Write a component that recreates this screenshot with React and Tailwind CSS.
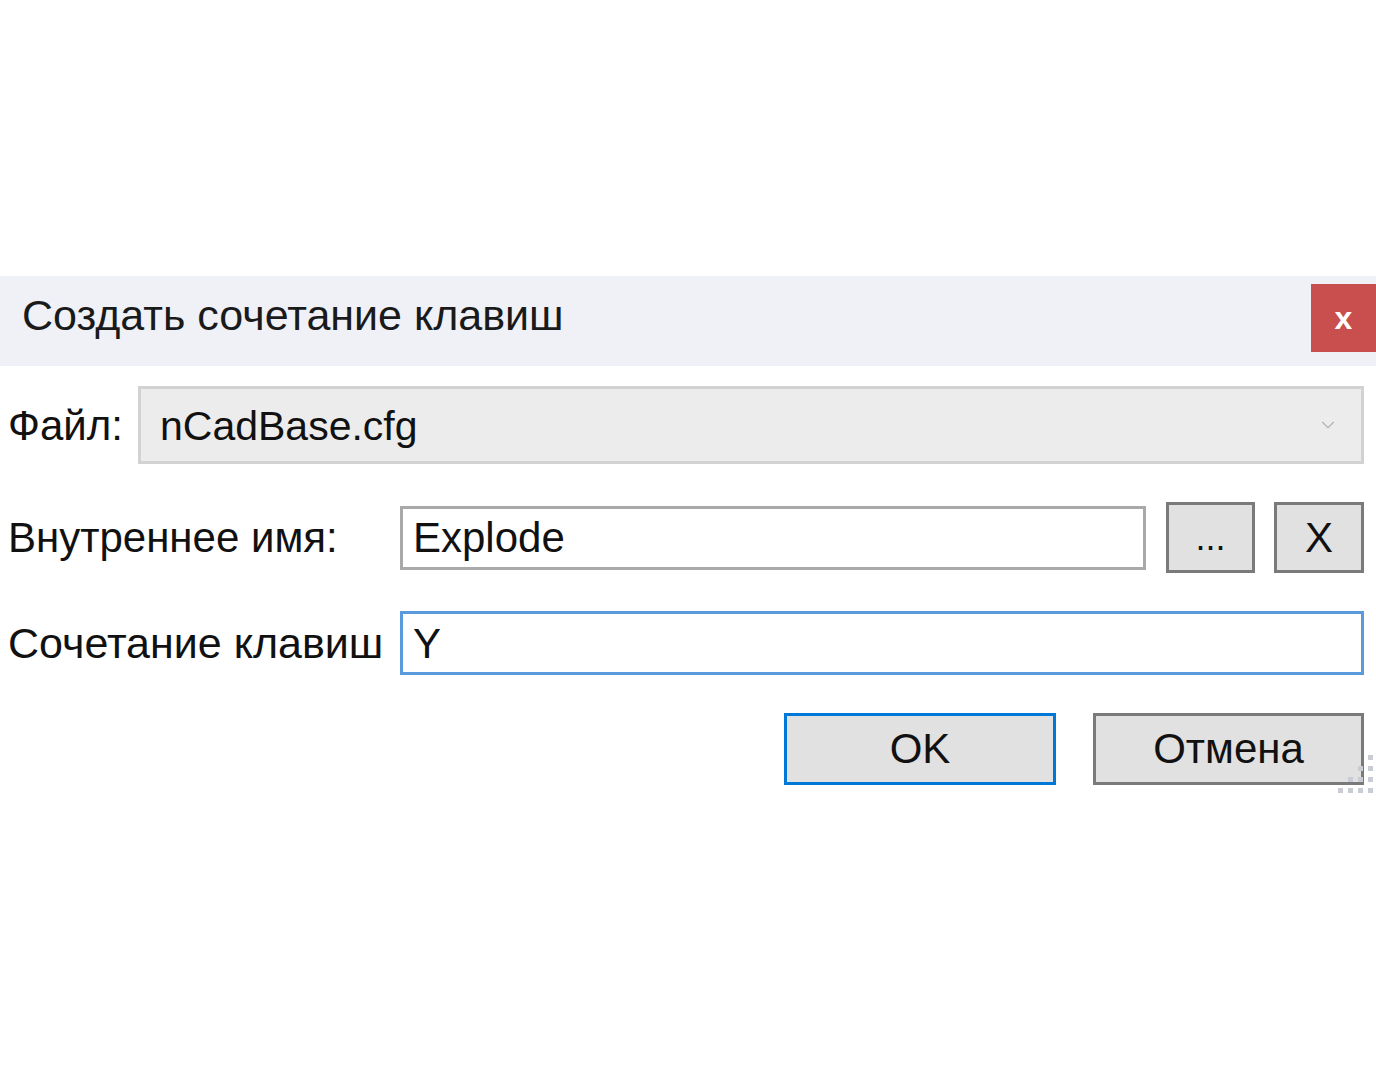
import { ChevronDown } from 'lucide-react';

const font = { fontFamily: '"Liberation Sans", Arial, sans-serif' };

function GripDots() {
  const dots = [
    [3, 0], [2, 1], [3, 1], [1, 2], [2, 2], [3, 2], [0, 3], [1, 3], [2, 3], [3, 3],
  ];
  return (
    <svg width="40" height="44" viewBox="0 0 40 44" className="shrink-0">
      {dots.map(([c, r]) => (
        <rect key={c + '-' + r} x={c * 10 + 2} y={r * 11 + 2} width="5" height="5" fill="#c9ccd4" />
      ))}
    </svg>
  );
}

export default function App() {
  return (
    <div className="w-[1376px] h-[1074px] bg-white pt-[276px] text-[#111]" style={font}>
      <div className="h-[90px] bg-[#eff1f6] flex items-start">
        <div className="pl-[22px] pt-[11px] text-[43px] leading-[56px] text-[#1a1a1a]">Создать сочетание клавиш</div>
        <button className="ml-auto mt-[8px] w-[65px] h-[68px] bg-[#c94f4f] text-white text-[32px] font-bold leading-none flex items-center justify-center">
          x
        </button>
      </div>

      <div className="pl-[8px] pr-[12px]">
        <div className="mt-[20px] flex items-center">
          <div className="w-[130px] text-[42px]">Файл:</div>
          <div className="flex-1 h-[78px] bg-[#ececec] border-[3px] border-[#d2d2d2] flex items-center pl-[19px] pr-[22px]">
            <span className="text-[41px] flex-1 pt-[3px]">nCadBase.cfg</span>
            <ChevronDown size={22} strokeWidth={1.5} className="text-[#b8b8b8]" />
          </div>
        </div>

        <div className="mt-[38px] flex items-center">
          <div className="w-[392px] text-[42px]">Внутреннее имя:</div>
          <div className="w-[746px] h-[64px] border-[3px] border-[#a9a9a9] bg-white flex items-center pl-[10px] text-[42px]">
            Explode
          </div>
          <button className="ml-[20px] w-[89px] h-[71px] bg-[#e1e1e1] border-[3px] border-[#7a7a7a] text-[36px] leading-none flex items-end justify-center pb-[14px]">
            ...
          </button>
          <button className="ml-[19px] w-[90px] h-[71px] bg-[#e1e1e1] border-[3px] border-[#7a7a7a] text-[42px] leading-none flex items-center justify-center">
            X
          </button>
        </div>

        <div className="mt-[38px] flex items-center">
          <div className="w-[392px] text-[43px]">Сочетание клавиш</div>
          <div className="flex-1 h-[64px] border-[3px] border-[#5a9bde] bg-white flex items-center pl-[10px] text-[42px]">
            Y
          </div>
        </div>

        <div className="mt-[37px] flex justify-end items-start">
          <button className="w-[272px] h-[72px] bg-[#e1e1e1] border-[3px] border-[#0078d7] text-[42px] leading-none flex items-center justify-center">
            OK
          </button>
          <button className="ml-[37px] w-[271px] h-[72px] bg-[#e1e1e1] border-[3px] border-[#7a7a7a] text-[42px] leading-none flex items-center justify-center">
            Отмена
          </button>
          <div className="-mr-[12px] mt-[40px] -ml-[28px]">
            <GripDots />
          </div>
        </div>
      </div>
    </div>
  );
}
